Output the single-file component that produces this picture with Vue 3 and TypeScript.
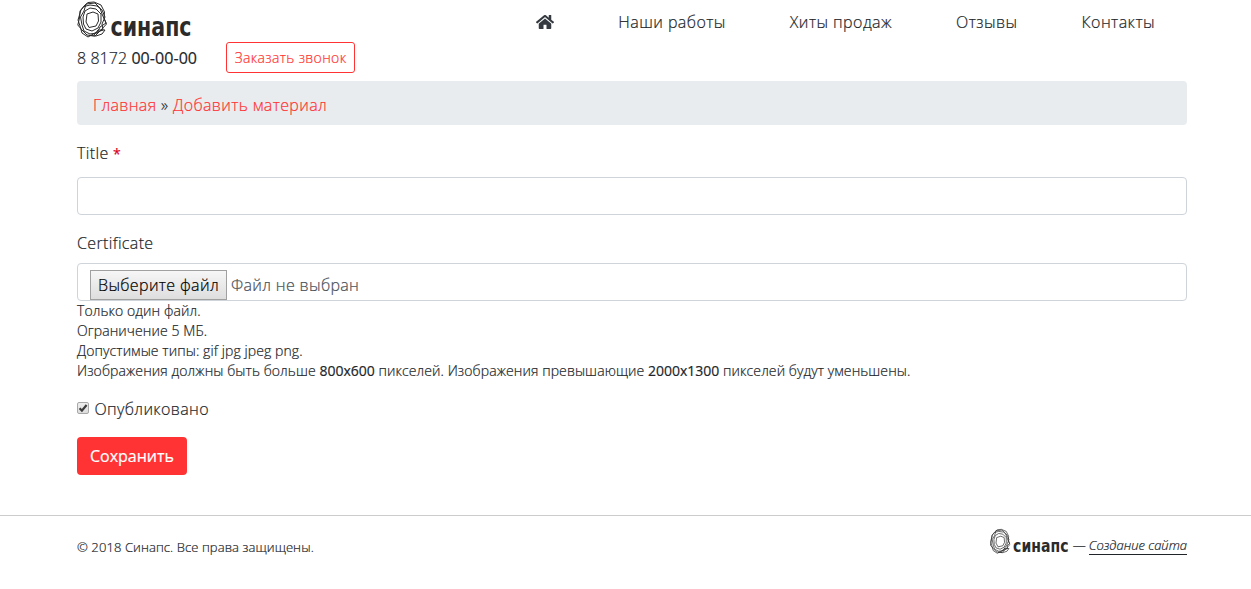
<script setup lang="ts">
import { ref } from 'vue'

const navItems: string[] = ['Наши работы', 'Хиты продаж', 'Отзывы', 'Контакты']
const title = ref<string>('')
const published = ref<boolean>(true)
</script>

<template>
  <div class="page">
    <svg class="defs" width="0" height="0" aria-hidden="true">
      <symbol id="brand-mark" viewBox="0 0 30 38">
        <g fill="none" stroke="#2b2b2b" stroke-width="1" stroke-linejoin="round">
          <path d="M7 6 11 2.500 17 2 24 5 27.500 12 27 18 29.500 24 24 30 18 36 10 35 5 30 .8 25 2.500 18 3 11Z" />
          <path d="M4 10 7 6.500 13 5 20 6 25 10 28 17 25 24 26 30 18 33 11 37 5 33 3 26 1 20Z" />
          <path d="M9 4 18 3 23 8 25 14 29 23 23 27 20 33 13 34 7 31 5 25 3.500 17 7 11Z" />
          <path d="M8 11 13 8 19 9 24 14 24 22 21 28 15 31 9 29 6.500 24 6 17Z" />
          <path d="M10 14 16 12 21 14 21.500 21 19 26 12 27.500 9 22Z" />
          <path d="M17 35 21 30 28 30 25 34 19 36 12 35.500" />
        </g>
      </symbol>
    </svg>

    <header class="header container">
      <div class="contacts">
        <a class="logo">
          <svg width="116" height="38" viewBox="0 0 116 38">
            <use href="#brand-mark" width="30" height="38" />
            <text x="33.500" y="35.500" textLength="81" lengthAdjust="spacingAndGlyphs" class="wordmark">синапс</text>
          </svg>
        </a>
        <div class="call">
          <span class="phone">8 8172 <b>00-00-00</b></span>
          <button class="outline-btn" type="button">Заказать звонок</button>
        </div>
      </div>
      <nav class="nav">
        <a class="home" aria-label="Главная">
          <svg width="18" height="16" viewBox="0 0 576 512" fill="#343a40">
            <path d="M488 312.700V456c0 13.300-10.700 24-24 24H348c-6.600 0-12-5.400-12-12V356c0-6.600-5.400-12-12-12h-72c-6.600 0-12 5.400-12 12v112c0 6.600-5.400 12-12 12H112c-13.300 0-24-10.700-24-24V312.700c0-3.600 1.600-7 4.400-9.300l188-154.800c4.400-3.600 10.800-3.600 15.300 0l188 154.800c2.700 2.300 4.300 5.700 4.300 9.300zm83.600-60.900L488 182.900V44.400c0-6.600-5.400-12-12-12h-56c-6.600 0-12 5.400-12 12V117l-89.500-73.700c-17.700-14.600-43.300-14.600-61 0L4.400 251.800c-5.100 4.200-5.800 11.800-1.600 16.900l25.500 31c4.200 5.100 11.800 5.800 16.900 1.600l235.200-193.700c4.400-3.600 10.800-3.600 15.300 0l235.200 193.700c5.100 4.200 12.700 3.500 16.900-1.600l25.500-31c4.200-5.200 3.400-12.700-1.700-16.900z" />
          </svg>
        </a>
        <a v-for="item in navItems" :key="item">{{ item }}</a>
      </nav>
    </header>

    <main class="container">
      <div class="breadcrumb"><a>Главная</a> » <a>Добавить материал</a></div>

      <form @submit.prevent>
        <label class="label" for="title">Title <span class="required">*</span></label>
        <input id="title" v-model="title" class="control" type="text" />

        <div class="label certificate">Certificate</div>
        <div class="control file">
          <button class="file-btn" type="button">Выберите файл</button>
          <span>Файл не выбран</span>
        </div>
        <div class="hint">
          Только один файл.<br />
          Ограничение 5 МБ.<br />
          Допустимые типы: gif jpg jpeg png.<br />
          Изображения должны быть больше <b>800x600</b> пикселей. Изображения превышающие
          <b>2000x1300</b> пикселей будут уменьшены.
        </div>

        <label class="check">
          <input v-model="published" type="checkbox" />
          <span class="box">
            <svg v-if="published" width="10" height="10" viewBox="0 0 10 10">
              <path d="M1.600 5.200 3.900 7.700 8.600 2" fill="none" stroke="#3c3c3c" stroke-width="2.200" />
            </svg>
          </span>
          Опубликовано
        </label>
        <button class="submit" type="submit">Сохранить</button>
      </form>
    </main>

    <footer class="footer">
      <div class="container footer-row">
        <span class="copyright">© 2018 Синапс. Все права защищены.</span>
        <div class="credit">
          <svg width="81" height="26" viewBox="0 0 116 38">
            <use href="#brand-mark" width="30" height="38" />
            <text x="34" y="34.500" textLength="81" lengthAdjust="spacingAndGlyphs" class="wordmark">синапс</text>
          </svg>
          <span class="dash">—</span>
          <a>Создание сайта</a>
        </div>
      </div>
    </footer>
  </div>
</template>

<style>
body {
  margin: 0;
  background: #fff;
}
</style>

<style scoped>
.page {
  height: 589px;
  overflow: hidden;
  font: 300 16px/24px 'Open Sans', sans-serif;
  letter-spacing: 0.36px;
  color: #212529;
  -webkit-text-stroke: 0.2px;
}
.page *,
.page *::before {
  box-sizing: border-box;
}
.defs {
  display: block;
}
.wordmark {
  font: 700 26px 'DejaVu Sans', sans-serif;
  letter-spacing: 0;
  fill: #2b2b2b;
  -webkit-text-stroke: 0;
}
.container {
  width: 1110px;
  margin-left: 77px;
}
b {
  font-weight: 400;
}
button {
  font-family: inherit;
  letter-spacing: inherit;
  margin: 0;
}
.header {
  display: flex;
  justify-content: space-between;
  height: 81px;
}
.logo,
.logo svg {
  display: block;
}
.logo svg,
.credit svg {
  overflow: visible;
}
.call {
  display: flex;
  align-items: center;
  margin-top: 4px;
  gap: 29px;
}
.phone {
  white-space: pre;
  letter-spacing: 0.06px;
}
.outline-btn {
  width: 129px;
  height: 31px;
  padding: 0;
  border: 1px solid #f33;
  border-radius: 3px;
  background: #fff;
  color: #f33;
  font-size: 14px;
  font-weight: 300;
  line-height: 21px;
}
.nav {
  display: flex;
  gap: 64px;
  padding: 10px 32px 0 0;
  letter-spacing: 0.44px;
}
.home svg {
  display: block;
  margin-top: 4px;
}
.breadcrumb {
  height: 44px;
  padding: 12px 16px 8px;
  border-radius: 4px;
  background: #e9ecef;
}
.breadcrumb a {
  color: #f33;
}
.label {
  display: block;
  height: 24px;
  margin-top: 16px;
}
.required {
  color: #d9001b;
  font-size: 14px;
  font-weight: 400;
  line-height: 1;
  letter-spacing: 0;
}
.control {
  display: block;
  width: 100%;
  height: 38px;
  margin-top: 12px;
  padding: 6px 12px;
  border: 1px solid #ced4da;
  border-radius: 4px;
  background: #fff;
  color: #495057;
  font: inherit;
}
.certificate {
  margin-top: 16px;
}
.certificate + .control {
  margin-top: 8px;
}
.file {
  display: flex;
  align-items: flex-start;
  gap: 4px;
}
.file span {
  line-height: 30px;
  letter-spacing: 0.34px;
}
.file-btn {
  flex: none;
  width: 137px;
  height: 30px;
  padding: 0;
  border: 1px solid #a0a0a0;
  border-radius: 0;
  background: linear-gradient(#f6f6f6, #dedede);
  color: #000;
  font-size: 16px;
  font-weight: 300;
  line-height: 28px;
}
.hint {
  font-size: 14px;
  line-height: 20px;
  letter-spacing: 0.09px;
}
.hint b {
  letter-spacing: 0;
}
.check {
  display: flex;
  align-items: center;
  margin-top: 16px;
}
.check input {
  position: absolute;
  opacity: 0;
}
.box {
  width: 12px;
  height: 12px;
  margin: -2px 5.5px 0 0;
  border: 1px solid #a8a8a8;
  border-radius: 2px;
  background: linear-gradient(#eee, #ddd);
}
.box svg {
  display: block;
}
.submit {
  display: block;
  width: 110px;
  height: 38px;
  margin-top: 16px;
  padding: 0;
  border: 0;
  border-radius: 4px;
  background: #f33;
  color: #fff;
  font-size: 16px;
  font-weight: 400;
  line-height: 24px;
  letter-spacing: 0;
}
.footer {
  margin-top: 40px;
  border-top: 1px solid #ccc;
}
.footer-row {
  display: flex;
  justify-content: space-between;
  font-size: 13px;
  line-height: 18px;
  letter-spacing: 0.09px;
}
.copyright {
  padding-top: 22px;
}
.credit {
  display: flex;
  align-items: flex-start;
  padding-top: 12px;
  letter-spacing: 0;
}
.dash {
  margin: 8px 3px 0 3px;
}
.credit a {
  margin-top: 8px;
  border-bottom: 1px solid #212529;
  font-style: italic;
}
</style>
